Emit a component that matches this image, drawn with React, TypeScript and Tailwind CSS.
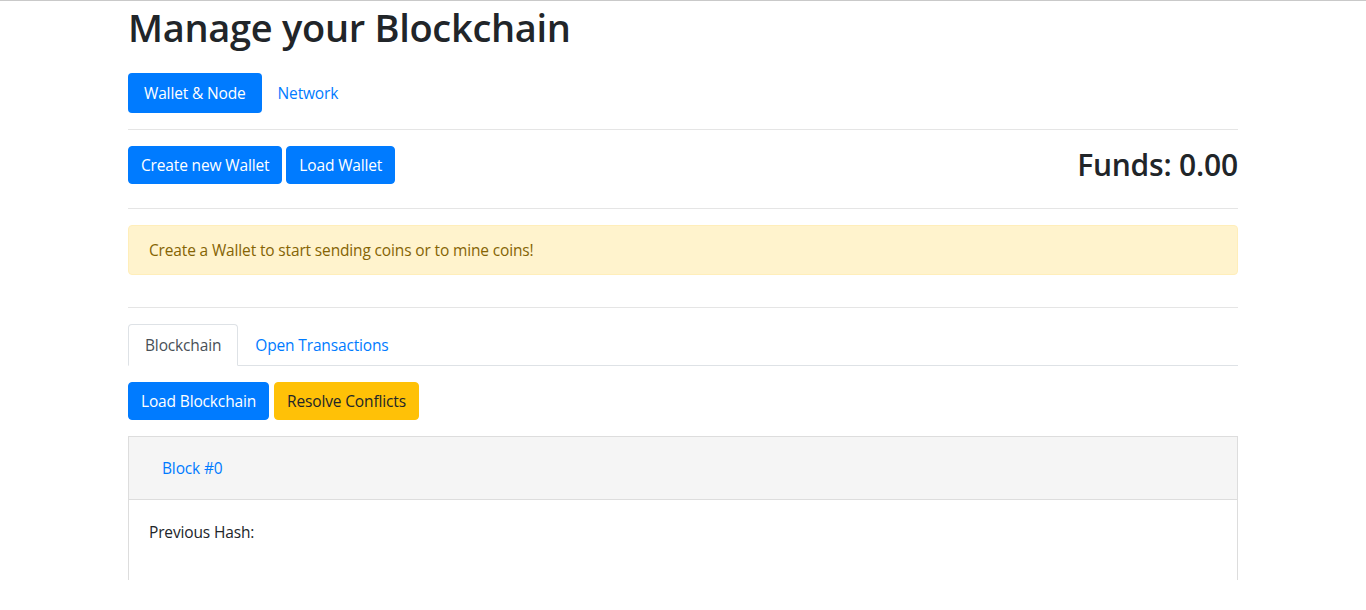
import React from "react";

function Divider() {
  return <hr className="my-4 border-0 border-t border-[rgba(0,0,0,0.1)]" />;
}

function Btn({
  children,
  tone = "primary",
}: {
  children: React.ReactNode;
  tone?: "primary" | "warning";
}) {
  const colors =
    tone === "primary"
      ? "bg-[#007bff] border-[#007bff] text-white"
      : "bg-[#ffc107] border-[#ffc107] text-[#212529]";
  return (
    <button
      className={`rounded border px-3 py-[6px] text-[15.5px] leading-6 tracking-[-0.15px] ${colors}`}
    >
      {children}
    </button>
  );
}

export default function App() {
  return (
    <div className="h-[610px] border-t border-[#c9c9c9] bg-white font-['Open_Sans',sans-serif] text-[15.5px] tracking-[-0.15px] text-[#212529]">
      <div className="mx-auto h-[579px] w-[1110px] overflow-hidden">
        <h1 className="mt-[2px] mb-[22px] text-[38px] font-semibold leading-[48px] tracking-[-0.3px]">
          Manage your Blockchain
        </h1>

        <nav className="flex">
          <a className="rounded bg-[#007bff] px-4 py-2 leading-6 text-white">
            Wallet &amp; Node
          </a>
          <a className="px-4 py-2 leading-6 text-[#007bff]">Network</a>
        </nav>

        <Divider />

        <div className="flex items-start justify-between">
          <div className="flex gap-1">
            <Btn>Create new Wallet</Btn>
            <Btn>Load Wallet</Btn>
          </div>
          <h2 className="mb-2 text-[30px] font-semibold leading-[38.4px] tracking-[-0.2px]">
            Funds: 0.00
          </h2>
        </div>

        <Divider />

        <div className="mb-8 rounded border border-[#ffeeba] bg-[#fff3cd] px-5 py-3 leading-6 text-[#856404]">
          Create a Wallet to start sending coins or to mine coins!
        </div>

        <Divider />

        <div className="flex border-b border-[#dee2e6]">
          <a className="-mb-px rounded-t border border-[#dee2e6] border-b-white bg-white px-4 py-2 leading-6 text-[#495057]">
            Blockchain
          </a>
          <a className="-mb-px border border-transparent px-4 py-2 leading-6 text-[#007bff]">
            Open Transactions
          </a>
        </div>

        <div className="mt-4 flex gap-[5px]">
          <Btn>Load Blockchain</Btn>
          <Btn tone="warning">Resolve Conflicts</Btn>
        </div>

        <div className="mt-4 border border-[#dddddd]">
          <div className="flex h-[63px] items-center border-b border-[#dddddd] bg-[#f5f5f5] px-[33px]">
            <a className="leading-6 text-[#007bff]">Block #0</a>
          </div>
          <div className="h-[200px] px-5 pt-5">
            <p className="leading-6">Previous Hash:</p>
          </div>
        </div>
      </div>
    </div>
  );
}
